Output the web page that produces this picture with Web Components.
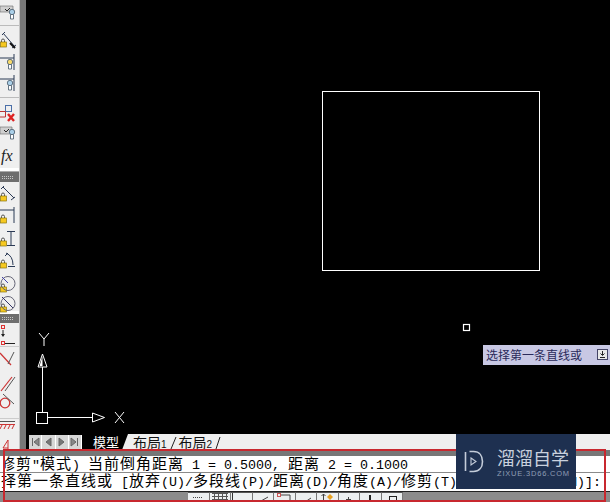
<!DOCTYPE html>
<html><head><meta charset="utf-8"><style>
html,body{margin:0;padding:0;background:#000}
body{width:610px;height:502px;overflow:hidden;font-family:"Liberation Sans","Noto Sans CJK SC",sans-serif}
</style></head><body>
<cad-app></cad-app>
<script>
const lock=(x,y)=>`<g transform="translate(${x} ${y})"><path d="M1.5 3V1.500a1.500 1.500 0 0 1 3 0V3" fill="none" stroke="#555"/><rect x=".5" y="3" width="6" height="5" fill="#f6c820" stroke="#8a7510" stroke-width=".7"/></g>`;
const bulb=(x,y,c)=>`<g transform="translate(${x} ${y})"><circle cx="3" cy="3" r="2.700" fill="${c}" stroke="#567" stroke-width=".9"/><path d="M1.500 5.500h3v4.500h-3z" fill="#fff" stroke="#567" stroke-width=".9"/></g>`;
const L='#2b3a55';
const icons=[
 [4,`<path d="M0 2h13v6H0z" fill="#cfcfcf" stroke="#666" stroke-width=".6"/><path d="M5 5l2 2 3-3" stroke="#222" fill="none"/>`+bulb(9,5,'#a9cfe8')],
 [32,lock(0,7)+`<path d="M3 1l12 14M2 3l3-3M12 16l4-3" stroke="${L}" fill="none"/><path d="M10 11l5 5" stroke="#111" stroke-width="2"/>`],
 [54,`<path d="M0 4h14M14 0v16" stroke="${L}" fill="none"/>`+bulb(7,5,'#f7d96a')],
 [75,`<path d="M0 4h14M14 0v16" stroke="${L}" fill="none"/>`+bulb(7,5,'#a9cfe8')],
 [105,`<rect x="5.500" y=".5" width="6" height="6" stroke="#4a6fa8" fill="none"/><path d="M0 6.500h5.500M5.500 6.500v5.500H0" stroke="#b33" fill="none"/><path d="M8 9l6 7M14 9l-6 7" stroke="#d22" stroke-width="2.400"/>`],
 [126,`<path d="M0 1h12v7H0z" fill="#cfcfcf" stroke="#666" stroke-width=".6"/><path d="M4 4l2 2 3-3" stroke="#222" fill="none"/>`+bulb(9,3,'#a9cfe8')],
 [186,lock(0,7)+`<path d="M3 1l11 11M1 3l3-3M11 14l4-3" stroke="${L}" fill="none"/>`],
 [207,lock(0,8)+`<path d="M0 3h14M14 0v16" stroke="${L}" fill="none"/>`],
 [231,lock(0,7)+`<path d="M7 .5h8M7 14.500h8M11 1v13" stroke="${L}" fill="none"/>`],
 [252,lock(0,8)+`<path d="M6 1q7 3 7 12M8 14.500h7" stroke="${L}" fill="none"/><path d="M5 4l3-3" stroke="${L}"/>`],
 [276,lock(0,8)+`<circle cx="8" cy="7.500" r="7" stroke="#667" fill="none"/><path d="M2 1l6 6" stroke="#44a" fill="none"/>`],
 [296,lock(0,8)+`<circle cx="8" cy="7.500" r="7" stroke="#667" fill="none"/><path d="M2 1l11 11" stroke="#336" fill="none"/>`],
 [325,`<rect x="1.500" y=".5" width="3" height="3" fill="none" stroke="#d33"/><path d="M3 5v6" stroke="#222"/><path d="M1 9l2 3 2-3z" fill="#222"/><rect x="1.500" y="16.500" width="3" height="3" fill="none" stroke="#d33"/><path d="M5 18.500h10" stroke="#222"/>`],
 [351,`<path d="M0 2l11 12" stroke="#c33" fill="none" stroke-width="1.200"/><path d="M8 13L14 1" stroke="#555" fill="none"/>`],
 [375,`<path d="M1 16L12 2" stroke="#c33" fill="none" stroke-width="1.200"/><path d="M5 16L15 2" stroke="#555" fill="none"/>`],
 [393,`<circle cx="5" cy="10" r="4.800" stroke="#c33" fill="none" stroke-width="1.300"/><path d="M3 1l11 10" stroke="#555" fill="none"/>`],
 [421,`<path d="M0 .5h15" stroke="#555"/><path d="M0 3.500h15" stroke="#c33"/><path d="M2 4L0 8M6 4L4 8M10 4L8 8M14 4l-2 4" stroke="#c33"/>`],
 [439,`<path d="M3 9L8 1v9M3 9h5" stroke="#c33" fill="none"/>`],
];
const def=(n,html)=>customElements.define(n,class extends HTMLElement{constructor(){super();this.attachShadow({mode:'open'}).innerHTML=html}});

def('cad-toolbar',`<style>:host{display:block;position:relative;width:26px;height:450px;box-sizing:border-box;background:#efefef;border-right:6px solid #777;flex:none}
:host::after{content:"";position:absolute;left:19px;top:0;width:1px;height:100%;background:#c4c4c4}
svg{position:absolute;left:0;top:0}</style>
<svg width="20" height="450" viewBox="0 0 20 450">
<path d="M0 25.500h19M0 97.500h19" stroke="#bbb"/>
<rect x="0" y="168" width="19" height="4" fill="#fff"/><path d="M0 171.500h19" stroke="#aaa"/>
<rect x="0" y="172" width="19" height="10" fill="#6e6e6e"/><path d="M2 176.500h11M2 178.500h11" stroke="#c8c8c8" stroke-dasharray="1 1"/>
<rect x="0" y="311" width="19" height="3" fill="#fff"/>
<rect x="0" y="314" width="19" height="9" fill="#6e6e6e"/><path d="M2 317.500h11M2 319.500h11" stroke="#c8c8c8" stroke-dasharray="1 1"/>
<path d="M0 346.500h19M0 418.500h19" stroke="#ccc"/>
${icons.map(([y,s])=>`<g transform="translate(0 ${y})">${s}</g>`).join('')}
<text x="1" y="161" font-family="Liberation Serif" font-style="italic" font-size="16" fill="#222">fx</text>
</svg>`);

def('cad-canvas',`<style>:host{display:block;position:relative;height:434px;background:#000;overflow:hidden}
svg{position:absolute;left:0;top:0}
.t{position:absolute;left:457px;top:345px;width:127px;height:20px;box-sizing:border-box;background:#c8c8e4;color:#2a2a5a;font:12px/19px "Noto Sans CJK SC",sans-serif;padding-left:3px;white-space:nowrap}
</style>
<svg width="584" height="434" viewBox="26 0 584 434" fill="none" stroke="#fff">
<rect x="322.500" y="91.500" width="217" height="179"/>
<rect x="463.500" y="324.500" width="6" height="6" stroke-width="1.200"/>
<rect x="36.500" y="412.500" width="11" height="11"/>
<path d="M47.500 417.500H92M42.500 412V367"/>
<path d="M92.500 413v9l12-4.500z"/>
<path d="M42.500 354l-4.500 13h9z"/><path d="M42.500 356l-3 10h3z" fill="#fff" stroke="none"/>
<path d="M115 412l9 11M124 412l-9 11M39 333l5 6 5-6M44 339v7"/>
</svg>
<div class="t">选择第一条直线或<svg style="left:114px;top:4px" width="12" height="12"><rect x=".5" y=".5" width="10" height="10" fill="#e8e8e8" stroke="#446"/><path d="M3 8.500h5M5.500 2v4M3.500 4.500l2 2 2-2" stroke="#222" fill="none"/></svg></div>`);

def('cad-tabs',`<style>:host{display:flex;height:16px;background:#efefef;align-items:flex-start;font:14px/15px "Noto Sans CJK SC",sans-serif;color:#111;position:relative}
.stub{width:3px;height:16px;background:#000;flex:none}
.nav{display:flex;width:53px;height:14px;background:#f4f4f4;flex:none;border-top:1px solid #000}
.nav i{flex:1;box-sizing:border-box;border-right:1px solid #fff;background:#d6d6d6;display:flex;align-items:center;justify-content:center}
.tab{height:16px;white-space:nowrap;flex:none}
.a{background:#000;color:#fff;width:29px;padding-left:11px;font-size:13px;line-height:15px}
.b{line-height:16px}
.n{font:10px "Liberation Sans",sans-serif}
svg.sl{flex:none;display:block}
</style>
<div class="stub"></div>
<div class="nav"><i><svg width="9" height="10"><path d="M1.500 1v8M8 1L3 5l5 4z" fill="#888" stroke="#666"/></svg></i><i><svg width="9" height="10"><path d="M7 1L2 5l5 4z" fill="#777" stroke="#666"/></svg></i><i><svg width="9" height="10"><path d="M2 1l5 4-5 4z" fill="#777" stroke="#666"/></svg></i><i><svg width="9" height="10"><path d="M7.500 1v8M1 1l5 4-5 4z" fill="#888" stroke="#666"/></svg></i></div>
<div class="tab a">模型</div>
<svg class="sl" width="11" height="16"><path d="M0 0h6L0 16z" fill="#000"/></svg>
<div class="tab b">布局<span class="n">1</span></div>
<svg class="sl" width="12" height="16"><path d="M4 15L9 3" stroke="#222" fill="none"/></svg>
<div class="tab b">布局<span class="n">2</span></div>
<svg class="sl" width="12" height="16"><path d="M4 15L8 3" stroke="#222" fill="none"/></svg>`);

const line=(runs)=>runs.map(r=>/[\u4e00-\u9fff]/.test(r)?`<span class="c">${r}</span>`:`<span>${r}</span>`).join('');
def('cad-command',`<style>:host{display:block;background:#777;padding-top:6px}
.l{background:#fff;white-space:pre;font:13.333px "Liberation Mono",monospace;color:#000;position:relative}
.c{font:15px/14px "Noto Sans CJK SC",sans-serif;letter-spacing:1px}
.one{height:16px;line-height:14px}
.one::before{content:"";position:absolute;left:0;top:0;width:5px;height:16px;background:#fff;z-index:1}
.sep{height:1px;background:#8a8a8a}
.two{height:18px;line-height:19px;padding-left:1px;border-bottom:1px solid #222}
</style>
<div class="l one">${line(['修剪','"','模式',') ','当前倒角距离',' 1 = 0.5000, ','距离',' 2 = 0.1000'])}</div>
<div class="sep"></div>
<div class="l two">${line(['择第一条直线或',' [','放弃','(U)/','多段线','(P)/','距离','(D)/','角度','(A)/','修剪','(T)/','方式','(E)/','多个','(M)]:'])}</div>`);

def('cad-status',`<style>:host{display:flex;height:10px;background:#8c8c8c;overflow:hidden}
.sp{width:188px;flex:none}
.c{width:21.500px;flex:none;box-sizing:border-box;background:#eceff0;border-top:1px solid #555;border-right:1px solid #777;position:relative}
svg{display:block}
</style>
<div class="sp"></div>
<div class="c"><svg width="21" height="9"><path d="M5 4.500h9" stroke="#444" stroke-dasharray="1 1"/></svg></div>
<div class="c"><svg width="21" height="9"><path d="M2 .5h16M2 3.500h16M2 6.500h16M4.500 0v9M8.500 0v9M12.500 0v9M16.500 0v9" stroke="#555" fill="none"/></svg></div>
<div class="c"><svg width="21" height="9"><path d="M1.500 0v9" stroke="#333"/></svg></div>
<div class="c"><svg width="21" height="9"><path d="M8 8l7-4" stroke="#444"/></svg></div>
<div class="c"><svg width="21" height="9"><rect x="3.500" y=".5" width="3" height="3" fill="none" stroke="#c55"/><path d="M7 2h9v7" fill="none" stroke="#444"/></svg></div>
<div class="c"><svg width="21" height="9"><path d="M9 9l6-4" stroke="#444"/></svg></div>
<div class="c"><svg width="21" height="9"><path d="M6.500 1v8M4.500 3l2-2 2 2" stroke="#444" fill="none"/><path d="M13 1l3 3-3 3-3-3z" fill="#e8a020"/></svg></div>
<div class="c"><svg width="21" height="9"><path d="M7 6.500h5M9.500 4v5" stroke="#444"/></svg></div>
<div class="c"><svg width="21" height="9"><path d="M10 2v7" stroke="#222" stroke-width="2"/></svg></div>
<div class="c"><svg width="21" height="9"><rect x="7.500" y="3.500" width="7" height="7" fill="none" stroke="#222"/></svg></div>`);

def('cad-watermark',`<style>:host{position:absolute;left:456px;top:434px;width:120px;height:55px;background:#1e3050;color:#c9d1de;display:flex;align-items:center;gap:13px;padding-left:8px;box-sizing:border-box;z-index:2}
.n{font:400 18px/19px "Noto Sans CJK SC",sans-serif;white-space:nowrap;margin-top:2px}
.u{font:7.500px/9px "Liberation Sans",sans-serif;letter-spacing:.8px;color:#8f9db4;margin-top:2px;white-space:nowrap}
svg{flex:none}
</style>
<svg width="20" height="23" viewBox="0 0 20 23" fill="none" stroke="#c4ccd9" stroke-width="1.600"><path d="M1.500 2v19"/><path d="M5.500 1.500h4c6 0 9 4.500 9 10s-3 10-9 10h-4"/><path d="M7 8l5 3.500-5 3.500z" stroke-width="1.100"/></svg>
<div><div class="n">溜溜自学</div><div class="u">ZIXUE.3D66.COM</div></div>`);

def('cad-app',`<style>:host{display:block;position:relative;width:610px;height:502px;overflow:hidden}
.m{display:flex;height:450px}
.r{flex:1;min-width:0}
.red{position:absolute;left:3px;top:449px;width:603px;height:53px;box-sizing:border-box;border:2px solid #c8282f;pointer-events:none;z-index:1}
</style>
<div class="m"><cad-toolbar></cad-toolbar><div class="r"><cad-canvas></cad-canvas><cad-tabs></cad-tabs></div></div>
<cad-command></cad-command>
<cad-status></cad-status>
<cad-watermark></cad-watermark>
<div class="red"></div>`);
</script>
</body></html>
